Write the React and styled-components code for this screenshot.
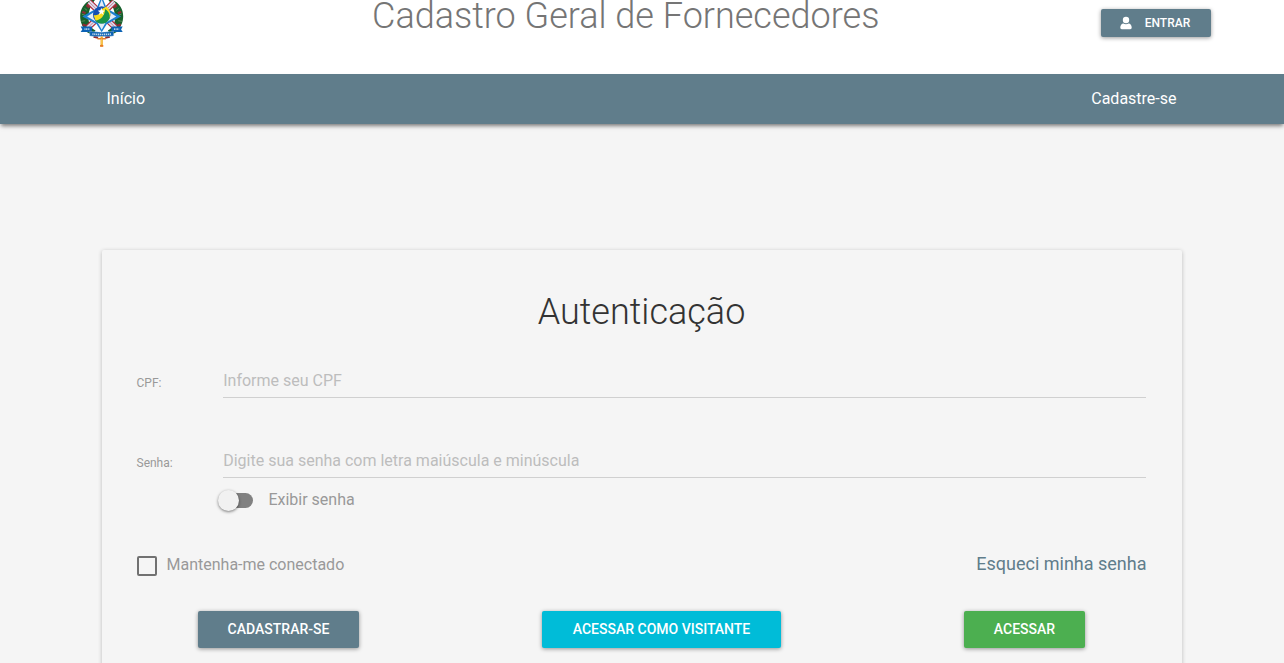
import React from "react";
import styled, { createGlobalStyle } from "styled-components";

const Global = createGlobalStyle`
  *, *::before, *::after { box-sizing: border-box; }
  html, body { margin: 0; padding: 0; height: 100%; overflow: hidden; }
  body { background: #f5f5f5; font-family: Roboto, "Liberation Sans", sans-serif; font-size: 16px; color: #333; }
  button, input { font-family: inherit; }
`;

const Page = styled.div`
  height: 100vh;
  overflow: hidden;
`;

const Header = styled.header`
  display: grid;
  grid-template-columns: 292px 1fr 182px;
  align-items: start;
  height: 74px;
  padding: 0 73px 0 80px;
  background: #fff;
`;

const Title = styled.h1`
  margin: 0;
  font-size: 36px;
  line-height: 32px;
  font-weight: 300;
  color: #757575;
  white-space: nowrap;
`;

const Button = styled.button`
  display: flex;
  align-items: center;
  justify-content: center;
  width: ${(p) => p.$width}px;
  height: 37px;
  padding: 0 0 1px;
  border: 0;
  border-radius: 2px;
  background: ${(p) => p.$color || "#607d8b"};
  color: #fff;
  font-size: 14px;
  font-weight: 500;
  line-height: 20px;
  text-transform: uppercase;
  white-space: nowrap;
  box-shadow: 0 1px 4px rgba(0, 0, 0, 0.4);
`;

const EnterButton = styled(Button)`
  justify-self: end;
  gap: 13px;
  height: 28px;
  margin-top: 9px;
  padding: 0 2px 0 0;
  font-size: 12px;
`;

const Nav = styled.nav`
  display: flex;
  align-items: center;
  justify-content: space-between;
  height: 50px;
  padding: 0 107.5px 0 106.5px;
  background: #607d8b;
  box-shadow: 0 3px 4px -1px rgba(0, 0, 0, 0.5);
`;

const NavLink = styled.a`
  color: #fff;
  font-size: 16px;
  line-height: 20px;
`;

const Card = styled.main`
  width: 1080px;
  height: 480px;
  margin: 126px auto 0;
  padding: 40px 36px 0 35px;
  border-radius: 2px;
  box-shadow: 0 1px 4px rgba(0, 0, 0, 0.24);
`;

const CardTitle = styled.h2`
  margin: 0;
  text-align: center;
  font-size: 36px;
  line-height: 44px;
  font-weight: 300;
  color: #333;
`;

const Field = styled.label`
  display: grid;
  grid-template-columns: 86px 1fr;
  height: 38px;
  margin-top: ${(p) => p.$gap}px;
`;

const FieldLabel = styled.span`
  margin-left: -0.5px;
  padding-top: 14px;
  font-size: 12px;
  line-height: 18px;
  color: #999;
`;

const Input = styled.input`
  width: 100%;
  height: 38px;
  padding: 4px 0 0 0.2px;
  border: 0;
  border-bottom: 1px solid #d0d0d0;
  border-radius: 0;
  outline: 0;
  background: transparent;
  font-size: 16px;
  color: #555;
  &::placeholder { color: #bdbdbd; opacity: 1; }
`;

const ToggleRow = styled.label`
  display: flex;
  align-items: center;
  height: 24px;
  margin: 10px 0 0 82px;
  color: #999;
`;

const Track = styled.span`
  display: flex;
  align-items: center;
  width: 29px;
  height: 15px;
  margin: 1px 15.4px 0 5px;
  border-radius: 15px;
  background: #818181;
`;

const Knob = styled.span`
  flex: none;
  width: 21px;
  height: 21px;
  margin-left: -6px;
  border-radius: 50%;
  background: #f1f1f1;
  box-shadow: 0 1px 3px rgba(0, 0, 0, 0.5);
`;

const ToggleText = styled.span`
  line-height: 20px;
`;

const OptionsRow = styled.div`
  display: flex;
  justify-content: space-between;
  height: 24px;
  margin-top: 41px;
`;

const CheckLabel = styled.label`
  display: flex;
  align-items: center;
  gap: 9.5px;
  color: #999;
  line-height: 20px;
`;

const CheckBox = styled.span`
  width: 20px;
  height: 20px;
  margin-top: 2px;
  border: 2px solid #717171;
  border-radius: 2px;
`;

const ForgotLink = styled.a`
  margin-right: -0.5px;
  font-size: 18px;
  line-height: 22px;
  color: #607d8b;
`;

const Actions = styled.div`
  display: flex;
  justify-content: space-between;
  margin-top: 34px;
  padding: 0 61px;
`;

function Emblem() {
  return (
    <svg width="44" height="48" viewBox="30 0 136 148.4" role="img" aria-label="Brasão">
      <path d="M64 0C26 14 18 66 52 100l16 8 10-14C52 82 46 38 76 0zM130 0c38 14 46 66 12 100l-16 8-10-14c27-12 32-56 2-94z" fill="#17602c" />
      <path d="M44 26l8 6M36 44l10 3M34 66l12-2M150 26l-8 6M158 44l-10 3M160 66l-12-2" stroke="#78a070" strokeWidth="2" />
      <path d="M50 16l9 8M37 36l10 5M38 76l10 3M144 16l-9 8M157 36l-10 5M156 76l-10 3M72 113l14 3M122 113l-14 3" stroke="#8e2c34" strokeWidth="7" />
      <path d="M58 6l82 80M136 6L54 86" stroke="#b02c3c" strokeWidth="19" />
      <path d="M58 6l82 80M136 6L54 86" stroke="#dcdff0" strokeWidth="12" />
      <path d="M58 6l82 80M136 6L54 86" stroke="#c14a58" strokeWidth="2" />
      <path d="M97-12l16 38 44 25-44 23-16 26-16-26-44-23 44-25z" fill="#1c7fd0" />
      <path d="M97-2l12 32 33 21-33 19-12 22-12-22-33-19 33-21z" fill="#e4edf7" />
      <circle cx="97" cy="46" r="27" fill="#1450b4" />
      <path d="M72 46c12 4 22-4 26-18l13-8c13 9 17 26 9 37-10 15-32 17-43 4z" fill="#f7dc1c" />
      <path d="M77 64c18-3 29-14 31-36 16 11 19 30 5 40-11 8-26 6-36-4z" fill="#1a9548" />
      <path d="M96 24l3 8 8 1-6 5 2 8-7-5-7 5 2-8-6-5 8-1z" fill="#fff" />
      <path d="M32 82h35v17H32l5-8zM127 82h35l-5 9 5 8h-35z" fill="#0c62b4" />
      <path d="M60 97q37 5 74 0v14q-37 4-74 0z" fill="#0c62b4" stroke="#d8e8ec" strokeWidth="1" />
      <path d="M44 90h16M135 90h16" stroke="#c5d9ea" strokeWidth="5" strokeDasharray="3 2" />
      <path d="M68 105q29 3 60 0" fill="none" stroke="#c5d9ea" strokeWidth="5" strokeDasharray="4 2" />
      <path d="M97 113v31" stroke="#f2a725" strokeWidth="7" />
      <path d="M84 120h26M92 142h10" stroke="#e77d28" strokeWidth="5" />
      <path d="M97 119v18" stroke="#ffe36a" strokeWidth="2" />
    </svg>
  );
}

function UserIcon() {
  return (
    <svg width="12" height="14" viewBox="0 0 12 14" fill="#fff">
      <circle cx="6" cy="4" r="3.2" />
      <path d="M.3 11.6C.3 9 1.6 7.6 3.4 7.4c1.6 1 3.6 1 5.2 0 1.8.2 3.1 1.6 3.1 4.2 0 1-.6 1.6-1.5 1.6H1.8C.9 13.2.3 12.6.3 11.6z" />
    </svg>
  );
}

export default function App() {
  return (
    <Page>
      <Global />
      <Header>
        <Emblem />
        <Title>Cadastro Geral de Fornecedores</Title>
        <EnterButton $width={110}>
          <UserIcon />
          Entrar
        </EnterButton>
      </Header>
      <Nav>
        <NavLink>Início</NavLink>
        <NavLink>Cadastre-se</NavLink>
      </Nav>
      <Card>
        <CardTitle>Autenticação</CardTitle>
        <Field $gap={26}>
          <FieldLabel>CPF:</FieldLabel>
          <Input placeholder="Informe seu CPF" />
        </Field>
        <Field $gap={42}>
          <FieldLabel>Senha:</FieldLabel>
          <Input type="password" placeholder="Digite sua senha com letra maiúscula e minúscula" />
        </Field>
        <ToggleRow>
          <Track>
            <Knob />
          </Track>
          <ToggleText>Exibir senha</ToggleText>
        </ToggleRow>
        <OptionsRow>
          <CheckLabel>
            <CheckBox />
            Mantenha-me conectado
          </CheckLabel>
          <ForgotLink>Esqueci minha senha</ForgotLink>
        </OptionsRow>
        <Actions>
          <Button $width={161}>Cadastrar-se</Button>
          <Button $width={239} $color="#00bcd8">Acessar como visitante</Button>
          <Button $width={121} $color="#4caf50">Acessar</Button>
        </Actions>
      </Card>
    </Page>
  );
}
